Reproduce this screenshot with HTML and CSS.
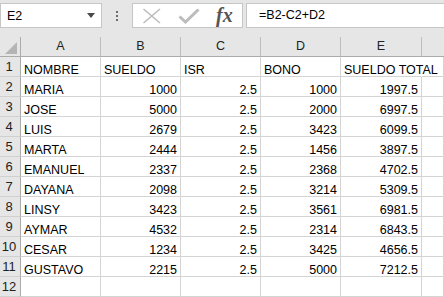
FILE: index.html
```html
<!DOCTYPE html>
<html lang="es">
<head>
    <meta charset="UTF-8">
    <title>Nomina</title>
    <link rel="stylesheet" href="styles.css">
</head>
<body>
    <div class="formula-bar">
        <div class="name-box">
            <span class="name-text">E2</span>
            <svg class="drop" width="8" height="5" viewBox="0 0 8 5"><path d="M0 0H8L4 5Z" fill="#4a4a4a"/></svg>
        </div>
        <div class="grip">
            <span></span><span></span><span></span>
        </div>
        <div class="buttons">
            <svg class="btn-x" width="20" height="16" viewBox="0 0 20 16">
                <path d="M1.5 1L18 15M18 1L1.5 15" stroke="#bcbcbc" stroke-width="1.6" fill="none"/>
            </svg>
            <svg class="btn-ok" width="22" height="16" viewBox="0 0 22 16">
                <path d="M1.5 8.5L7.5 14L20.5 1.5" stroke="#bcbcbc" stroke-width="3" fill="none"/>
            </svg>
            <span class="fx">fx</span>
        </div>
        <div class="formula-input">=B2-C2+D2</div>
    </div>

    <div class="sheet">
        <div class="corner"><span class="tri"></span></div>
        <div class="col-head">A</div>
        <div class="col-head">B</div>
        <div class="col-head">C</div>
        <div class="col-head">D</div>
        <div class="col-head">E</div>
        <div class="col-head last"></div>

        <div class="row-head">1</div>
        <div class="cell">NOMBRE</div>
        <div class="cell">SUELDO</div>
        <div class="cell">ISR</div>
        <div class="cell">BONO</div>
        <div class="cell spill">SUELDO TOTAL</div>
        <div class="cell"></div>

        <div class="row-head">2</div>
        <div class="cell">MARIA</div>
        <div class="cell num">1000</div>
        <div class="cell num">2.5</div>
        <div class="cell num">1000</div>
        <div class="cell num">1997.5</div>
        <div class="cell"></div>

        <div class="row-head">3</div>
        <div class="cell">JOSE</div>
        <div class="cell num">5000</div>
        <div class="cell num">2.5</div>
        <div class="cell num">2000</div>
        <div class="cell num">6997.5</div>
        <div class="cell"></div>

        <div class="row-head">4</div>
        <div class="cell">LUIS</div>
        <div class="cell num">2679</div>
        <div class="cell num">2.5</div>
        <div class="cell num">3423</div>
        <div class="cell num">6099.5</div>
        <div class="cell"></div>

        <div class="row-head">5</div>
        <div class="cell">MARTA</div>
        <div class="cell num">2444</div>
        <div class="cell num">2.5</div>
        <div class="cell num">1456</div>
        <div class="cell num">3897.5</div>
        <div class="cell"></div>

        <div class="row-head">6</div>
        <div class="cell">EMANUEL</div>
        <div class="cell num">2337</div>
        <div class="cell num">2.5</div>
        <div class="cell num">2368</div>
        <div class="cell num">4702.5</div>
        <div class="cell"></div>

        <div class="row-head">7</div>
        <div class="cell">DAYANA</div>
        <div class="cell num">2098</div>
        <div class="cell num">2.5</div>
        <div class="cell num">3214</div>
        <div class="cell num">5309.5</div>
        <div class="cell"></div>

        <div class="row-head">8</div>
        <div class="cell">LINSY</div>
        <div class="cell num">3423</div>
        <div class="cell num">2.5</div>
        <div class="cell num">3561</div>
        <div class="cell num">6981.5</div>
        <div class="cell"></div>

        <div class="row-head">9</div>
        <div class="cell">AYMAR</div>
        <div class="cell num">4532</div>
        <div class="cell num">2.5</div>
        <div class="cell num">2314</div>
        <div class="cell num">6843.5</div>
        <div class="cell"></div>

        <div class="row-head">10</div>
        <div class="cell">CESAR</div>
        <div class="cell num">1234</div>
        <div class="cell num">2.5</div>
        <div class="cell num">3425</div>
        <div class="cell num">4656.5</div>
        <div class="cell"></div>

        <div class="row-head">11</div>
        <div class="cell">GUSTAVO</div>
        <div class="cell num">2215</div>
        <div class="cell num">2.5</div>
        <div class="cell num">5000</div>
        <div class="cell num">7212.5</div>
        <div class="cell"></div>

        <div class="row-head">12</div>
        <div class="cell"></div>
        <div class="cell"></div>
        <div class="cell"></div>
        <div class="cell"></div>
        <div class="cell"></div>
        <div class="cell"></div>
    </div>
</body>
</html>
```

FILE: styles.css
```css
body {
    margin: 0;
    font-family: "Liberation Sans", Arial, sans-serif;
    font-size: 12.5px;
    color: #000;
    background: #e6e6e6;
    overflow: hidden;
}
.formula-bar {
    height: 37px;
    padding-top: 3px;
    box-sizing: border-box;
    display: flex;
    align-items: flex-start;
}
.name-box {
    width: 102px;
    height: 25px;
    box-sizing: border-box;
    background: #fff;
    border: 1px solid #c6c6c6;
    display: flex;
    align-items: center;
    justify-content: space-between;
    padding: 0 6px 0 6px;
}
.name-text {
    font-size: 12.5px;
}
.grip {
    width: 30px;
    height: 25px;
    display: flex;
    flex-direction: column;
    align-items: center;
    justify-content: center;
    gap: 2px;
}
.grip span {
    width: 2px;
    height: 2px;
    background: #6e6e6e;
}
.buttons {
    width: 111px;
    height: 25px;
    box-sizing: border-box;
    background: #fff;
    border: 1px solid #c6c6c6;
    display: flex;
    align-items: center;
    padding-left: 9px;
}
.btn-x {
    margin-right: 16px;
}
.btn-ok {
    margin-right: 16px;
}
.fx {
    font-family: "Liberation Serif", "Times New Roman", serif;
    font-style: italic;
    font-weight: bold;
    font-size: 20px;
    color: #555;
    line-height: 20px;
    margin-top: -2px;
}
.formula-input {
    flex: 1;
    height: 25px;
    box-sizing: border-box;
    margin-left: 3px;
    background: #fff;
    border: 1px solid #c6c6c6;
    border-right: none;
    padding: 0 0 0 12px;
    line-height: 23px;
}
.sheet {
    display: grid;
    grid-template-columns: 21px 80px 80px 80px 80px 81px 1fr;
    grid-auto-rows: 20px;
    background: #fff;
}
.corner, .col-head, .row-head {
    background: #e6e6e6;
    box-sizing: border-box;
    color: #222;
}
.corner {
    position: relative;
    border-right: 1px solid #ababab;
    border-bottom: 1px solid #ababab;
}
.tri {
    position: absolute;
    right: 3px;
    bottom: 2px;
    width: 0;
    height: 0;
    border-left: 12px solid transparent;
    border-bottom: 12px solid #b4b4b4;
}
.col-head {
    border-right: 1px solid #bdbdbd;
    border-bottom: 1px solid #ababab;
    text-align: center;
    line-height: 19px;
}
.col-head.last {
    border-right: none;
}
.row-head {
    border-right: 1px solid #ababab;
    border-bottom: 1px solid #d0d0d0;
    text-align: center;
    padding-right: 2px;
    font-size: 13px;
    line-height: 20px;
}
.cell {
    box-sizing: border-box;
    border-right: 1px solid #d4d4d4;
    border-bottom: 1px solid #d4d4d4;
    padding: 6px 3px 0;
    line-height: 14px;
    white-space: nowrap;
}
.cell.num {
    text-align: right;
}
.cell.spill {
    border-right-color: transparent;
}
```
